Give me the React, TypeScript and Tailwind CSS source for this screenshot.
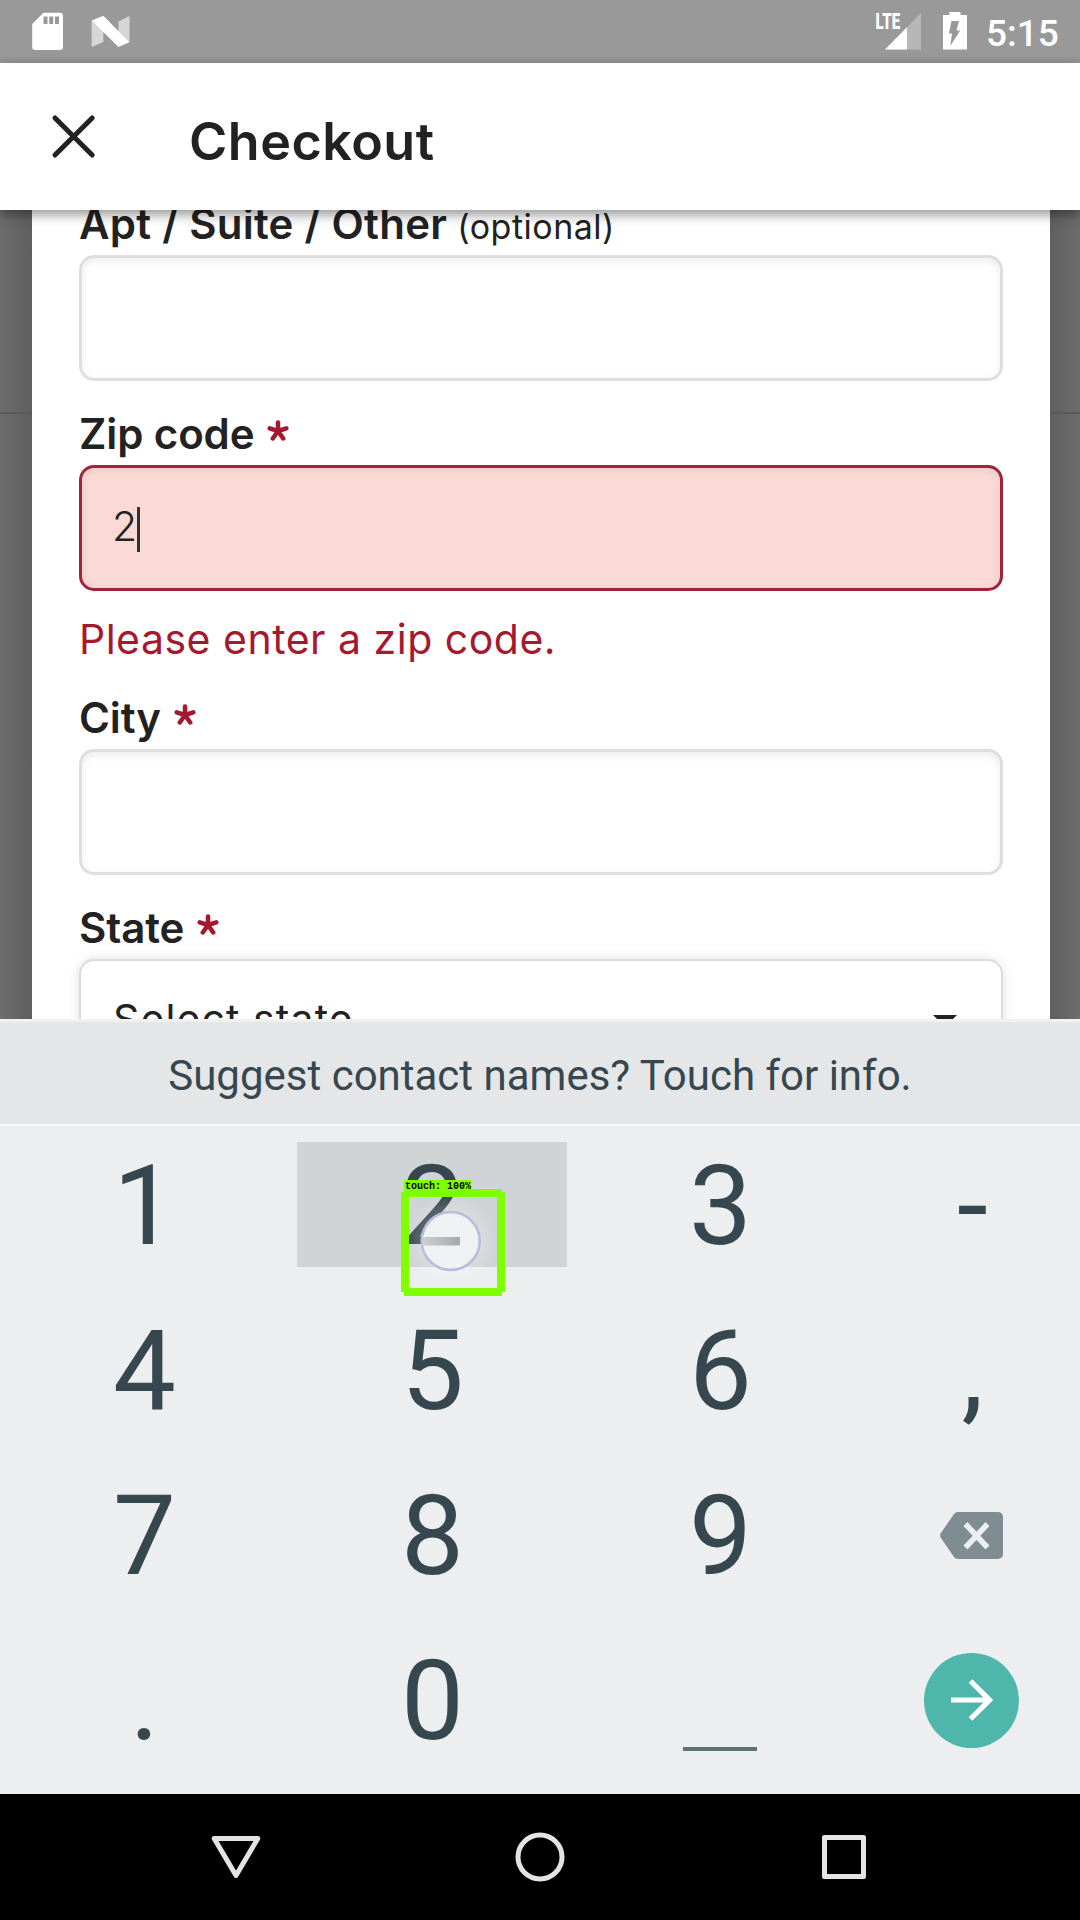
import React from "react";

function StatusBar() {
  return (
    <div className="flex h-[63px] shrink-0 items-start bg-[#999999] pl-8 text-white">
      <svg className="mt-[12px] h-[39px] w-8" viewBox="32 12 32 39">
        <path d="M43.5 12.7H60a3 3 0 0 1 3 3V47a3 3 0 0 1-3 3H35.200a3 3 0 0 1-3-3V24z" fill="#fff" />
        <path d="M43.500 16.500h4V24h-4zM49.200 16.500h4V24h-4zM55 16.500h4V24h-4z" fill="#999" />
      </svg>
      <svg className="ml-[27px] mt-[15px] h-[33px] w-[40px]" viewBox="91 15 40 33">
        <path d="M91.600 20.500L103.300 31v11L91.600 47zM118.500 21.500L129.500 16v26.300L118.500 31.500z" fill="#fff" fillOpacity=".6" />
        <path d="M91.600 20.500L103.300 15.700 129.500 42.300 118.500 47z" fill="#fff" />
      </svg>
      <div className="ml-auto flex items-start">
        <svg className="mt-[12px] h-[39px] w-[48px]" viewBox="875 12 48 39">
          <path d="M921 13v36.500h-36z" fill="#fff" fillOpacity=".3" />
          <path d="M907 27.200v22.300h-22z" fill="#fff" />
          <text x="875.600" y="29" fontFamily="Roboto" fontWeight="900" fontSize="22" textLength="24.500" lengthAdjust="spacingAndGlyphs" fill="#fff">LTE</text>
        </svg>
        <svg className="ml-5 mt-[12px] h-[39px] w-[24px]" viewBox="943 12 24 39">
          <path d="M943 15h6.500v-3h11v3h6.500v34.500h-24z" fill="#fff" />
          <path d="M951.500 21H959l-2.500 9.500h3.700L950.300 46l1.700-12.500h-3.200z" fill="#999" />
        </svg>
        <div className="ml-[19px] mr-5 mt-[10px] w-[74px] font-[Roboto,sans-serif] text-[37px] font-medium leading-[48px]">5:15</div>
      </div>
    </div>
  );
}

function Toolbar() {
  return (
    <div className="relative z-10 flex h-[147px] shrink-0 items-start bg-white shadow-[0_4px_12px_rgba(0,0,0,0.45)]">
      <svg className="ml-[50px] mt-[50px] h-[48px] w-[47px]" viewBox="50 113 47 48">
        <path d="M55 118l37.200 37M92.200 118L55 155" stroke="#222" strokeWidth="5" strokeLinecap="round" />
      </svg>
      <h1 className="ml-[92px] mt-[47px] text-[52px] font-semibold leading-[64px] tracking-[0.5px]">Checkout</h1>
    </div>
  );
}

function Label({ text, optional }: { text: string; optional?: boolean }) {
  return (
    <div className="mb-1.5 flex h-[50px] items-start whitespace-pre text-[42px] font-semibold leading-[50px]">
      <span className={optional ? "tracking-[0.25px]" : "tracking-[-0.1px]"}>{text}</span>
      {optional ? (
        <span className="ml-[10px] mt-[3px] text-[34px] font-normal tracking-[0.5px]">(optional)</span>
      ) : (
        <svg className="ml-[13px] mt-[11px] h-[22px] w-[22px]" viewBox="-11 -11 22 22">
          <path d="M0 0V-8.500M0 0L8.300-2.700M0 0L5.200 7.500M0 0L-5.200 7.500M0 0L-8.300-2.700" stroke="#a5192f" strokeWidth="4.500" strokeLinecap="round" />
        </svg>
      )}
    </div>
  );
}

function Field({ error, value }: { error?: boolean; value?: string }) {
  return (
    <div
      className={
        error
          ? "flex h-[126px] items-center rounded-[15px] border-[3px] border-[#a0243a] bg-[#fbdad6] pl-[31px] shadow-[inset_0_2px_8px_rgba(0,0,0,0.08)]"
          : "flex h-[126px] items-center rounded-[15px] border-[3px] border-[#dedede] bg-white pl-[31px] shadow-[inset_0_3px_8px_rgba(0,0,0,0.08)]"
      }
    >
      {value && (
        <>
          <span className="-ml-px -mt-1 text-[41px] font-[350] leading-[50px]">{value}</span>
          <span className="mt-[3px] h-[45px] w-[3px] bg-[#333]" />
        </>
      )}
    </div>
  );
}

function Form() {
  return (
    <div className="flex h-[809px] shrink-0 overflow-hidden">
      <div className="flex w-8 flex-col bg-gradient-to-r from-[#6d6d6d] to-[#5f5f5f]">
        <div className="mt-[202px] h-[2px] bg-[#5a5a5a]" />
      </div>
      <div className="w-[1018px] shrink-0 bg-white pl-[47px] pr-[47px]">
        <div className="-mt-[11px]">
          <Label text="Apt / Suite / Other" optional />
          <Field />
        </div>
        <div className="mt-7">
          <Label text="Zip code" />
          <Field error value="2" />
          <p className="mt-[23px] text-[41px] font-normal leading-[50px] tracking-[0.5px] text-[#a5192f]">Please enter a zip code.</p>
        </div>
        <div className="mt-[29px]">
          <Label text="City" />
          <Field />
        </div>
        <div className="mt-7">
          <Label text="State" />
          <div className="flex h-[126px] items-start rounded-[15px] border-2 border-[#dcdcdc] bg-white pl-8 pr-11 shadow-[0_0_12px_rgba(0,0,0,0.12)]">
            <span className="mt-[33px] text-[41px] font-normal leading-[50px] tracking-[1.1px]">Select state</span>
            <svg className="ml-auto mt-[54px] h-3 w-6" viewBox="0 0 24 12">
              <path d="M0 0H24L12 12z" fill="#222" />
            </svg>
          </div>
        </div>
      </div>
      <div className="flex w-[30px] flex-col bg-gradient-to-l from-[#6d6d6d] to-[#5f5f5f]">
        <div className="mt-[202px] h-[2px] bg-[#5a5a5a]" />
      </div>
    </div>
  );
}

function Key({ label }: { label: string }) {
  return <div className="flex items-center justify-center pl-px pt-px">{label}</div>;
}

function TouchMarker() {
  return (
    <div className="absolute left-[113px] top-[57px] h-[117px] w-[104px]">
      <svg className="absolute left-0 top-0 h-[117px] w-[104px]" viewBox="401 1180 104 117">
        <defs>
          <linearGradient id="bar" x1="0" x2="1">
            <stop offset="0" stopColor="#ccd0d2" />
            <stop offset="1" stopColor="#a5a9ab" />
          </linearGradient>
          <radialGradient id="halo">
            <stop offset="0.6" stopColor="#fff" stopOpacity=".2" />
            <stop offset="1" stopColor="#fff" stopOpacity="0" />
          </radialGradient>
        </defs>
        <circle cx="450.700" cy="1241" r="46" fill="url(#halo)" />
        <circle cx="450.700" cy="1241" r="29" fill="#eff1f3" stroke="#b8bddb" strokeWidth="2.500" />
        <path d="M422 1237h38v8.500h-38z" fill="url(#bar)" />
        <path d="M404 1189h98v3h3v100h-3v4h-98v-4h-3v-100h3zM409 1197v91h88v-91z" fill="#80ff00" fillRule="evenodd" />
      </svg>
      <div className="absolute left-[3px] top-0 h-[13px] w-[67px] whitespace-nowrap bg-[#80ff00] pl-px font-['Liberation_Mono',monospace] text-[10px] font-bold leading-[14px] text-black">touch: 100%</div>
    </div>
  );
}

function Keyboard() {
  return (
    <div className="h-[775px] shrink-0 bg-[#eceeef] font-[Roboto,sans-serif] text-[#37474f]">
      <div className="flex h-[107px] items-center justify-center border-b-[2px] border-t-[3px] border-b-[#f7f8f8] border-t-[#f0f1f1] bg-[#e4e6e7] text-[42px]">
        <span className="mt-[4px]">Suggest contact names? Touch for info.</span>
      </div>
      <div className="-mt-[3px] grid auto-rows-[165px] grid-cols-[288px_288px_288px_216px] text-[112px] leading-[132px]">
        <Key label="1" />
        <div className="relative flex items-center justify-center pl-px pt-px">
          <div className="absolute left-[9px] top-[19px] h-[125px] w-[270px] bg-[#d1d4d6]" />
          <span className="relative">2</span>
          <TouchMarker />
        </div>
        <Key label="3" />
        <Key label="-" />
        <Key label="4" />
        <Key label="5" />
        <Key label="6" />
        <Key label="," />
        <Key label="7" />
        <Key label="8" />
        <Key label="9" />
        <div className="flex items-center justify-center pb-px pr-px">
          <svg className="h-[47px] w-[63px]" viewBox="0 0 63 47">
            <path d="M14 2Q15.500 0 18 0H58a5 5 0 0 1 5 5V42a5 5 0 0 1-5 5H18q-2.500 0-4-2L.6 25.500Q-.4 23.500.6 21.500z" fill="#7f8c91" />
            <path d="M25.500 12L47.500 35.500M47.500 12L25.500 35.500" stroke="#eceff0" strokeWidth="5.500" />
          </svg>
        </div>
        <Key label="." />
        <Key label="0" />
        <div className="flex items-end justify-center pb-8">
          <div className="h-[4px] w-[74px] bg-[#5f7075]" />
        </div>
        <div className="flex items-center justify-center pb-px pr-px">
          <div className="flex h-[95px] w-[95px] items-center justify-center rounded-full bg-[#4fb6ac]">
            <svg className="h-[42px] w-[42px]" viewBox="0 0 42 42" fill="none">
              <path d="M0 21H37M19.500 2L38.500 21 19.500 40" stroke="#fff" strokeWidth="5.200" />
            </svg>
          </div>
        </div>
      </div>
    </div>
  );
}

function NavBar() {
  return (
    <div className="flex h-[126px] shrink-0 items-center justify-center gap-[254px] bg-black">
      <svg className="h-[50px] w-[50px]" viewBox="0 0 50 50" fill="none" stroke="#e4e4e4" strokeWidth="5" strokeLinejoin="round">
        <path d="M3.200 6.500H46.800L25 43.500z" />
      </svg>
      <svg className="h-[50px] w-[50px]" viewBox="0 0 50 50" fill="none" stroke="#e4e4e4" strokeWidth="5">
        <circle cx="25" cy="25" r="22" />
      </svg>
      <svg className="h-[50px] w-[50px]" viewBox="0 0 50 50" fill="none" stroke="#e4e4e4" strokeWidth="5" strokeLinejoin="round">
        <path d="M5.500 5.500h39v39h-39z" />
      </svg>
    </div>
  );
}

export default function App() {
  return (
    <div className="flex h-[1920px] w-[1080px] flex-col overflow-hidden bg-white font-[Inter,sans-serif] text-[#222]">
      <StatusBar />
      <Toolbar />
      <Form />
      <Keyboard />
      <NavBar />
    </div>
  );
}
